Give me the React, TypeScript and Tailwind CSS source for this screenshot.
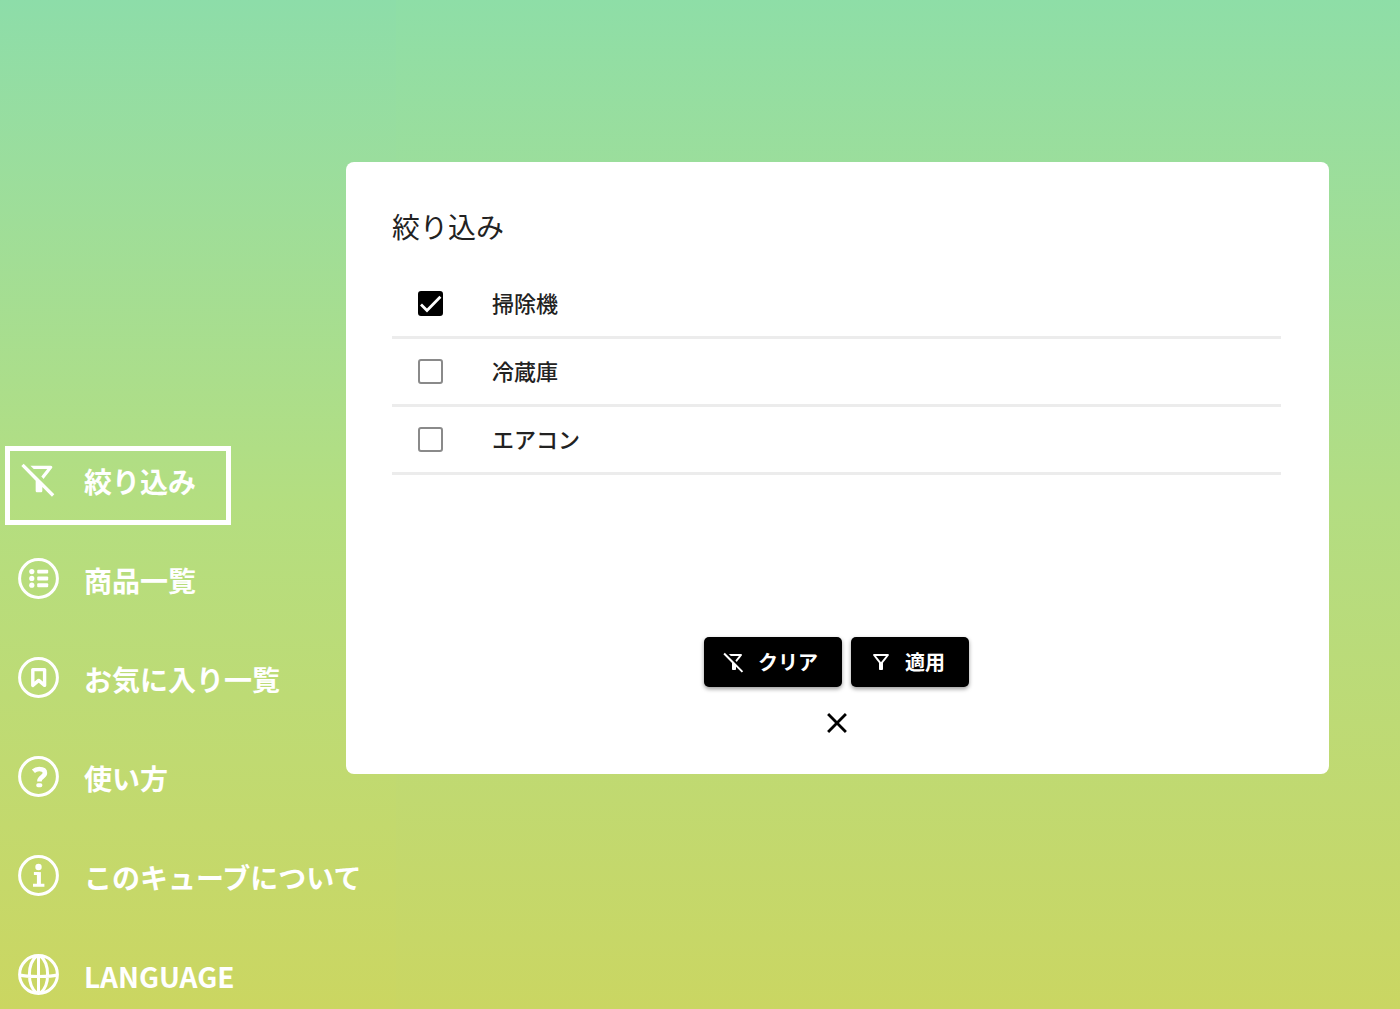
import { useState, type ReactNode } from 'react';

const FILTER_OFF =
  'M16.95 6l-3.57 4.55 1.43 1.43c1.03-1.31 4.98-6.37 4.98-6.37A.998.998 0 0 0 19 4H6.83l2 2h8.12zM2.81 2.81 1.39 4.22 10 13v6c0 .55.45 1 1 1h2c.55 0 1-.45 1-1v-2.17l5.78 5.78 1.41-1.41L2.81 2.81z';
const FILTER =
  'M7 6h10l-5.01 6.3L7 6zM4.25 5.61C6.27 8.2 10 13 10 13v6c0 .55.45 1 1 1h2c.55 0 1-.45 1-1v-6s3.72-4.8 5.74-7.39C20.25 4.95 19.78 4 18.95 4H5.04C4.21 4 3.74 4.95 4.25 5.61z';
const CLOSE =
  'M19 6.41 17.59 5 12 10.59 6.41 5 5 6.41 10.59 12 5 17.59 6.41 19 12 13.41 17.59 19 19 17.59 13.41 12z';

function Solid({ d, className }: { d: string; className: string }) {
  return (
    <svg viewBox="0 0 24 24" fill="currentColor" className={className} aria-hidden="true">
      <path d={d} />
    </svg>
  );
}

function Ring({ children }: { children: ReactNode }) {
  return (
    <svg viewBox="0 0 42 42" fill="none" stroke="currentColor" strokeWidth="3" className="size-[42px]" aria-hidden="true">
      <circle cx="20.5" cy="21.5" r="18.9" />
      {children}
    </svg>
  );
}

const NAV: { label: string; icon: ReactNode }[] = [
  { label: '絞り込み', icon: <Solid d={FILTER_OFF} className="size-10" /> },
  {
    label: '商品一覧',
    icon: (
      <Ring>
        <g fill="currentColor" stroke="none">
          <circle cx="13.8" cy="14.6" r="2.6" />
          <circle cx="13.8" cy="21.4" r="2.6" />
          <circle cx="13.8" cy="28.2" r="2.6" />
          <rect x="19.2" y="12.7" width="11" height="3.9" rx="1" />
          <rect x="19.2" y="19.5" width="11" height="3.9" rx="1" />
          <rect x="19.2" y="26.3" width="11" height="3.9" rx="1" />
        </g>
      </Ring>
    ),
  },
  {
    label: 'お気に入り一覧',
    icon: (
      <Ring>
        <path d="M14.8 13.6h11.8v15.8l-5.9-5-5.9 5z" strokeWidth="3.4" strokeLinejoin="round" />
      </Ring>
    ),
  },
  {
    label: '使い方',
    icon: (
      <Ring>
        <path d="M15.4 16.2c1.700-1.500 3.600-2.200 5.800-2.200 3.500 0 5.700 1.500 5.700 4.100 0 4-5.500 3.700-5.500 8.300" strokeWidth="4.6" />
        <rect x="18.3" y="28.2" width="6" height="4" rx="1.6" fill="currentColor" stroke="none" />
      </Ring>
    ),
  },
  {
    label: 'このキューブについて',
    icon: (
      <Ring>
        <circle cx="20.5" cy="13" r="3.2" fill="currentColor" stroke="none" />
        <path d="M15.9 19.6h5M15 31.3h11.4" strokeWidth="3" />
        <path d="M20.9 18.1v13.2" strokeWidth="4" />
      </Ring>
    ),
  },
  {
    label: 'LANGUAGE',
    icon: (
      <Ring>
        <path d="M20.5 2.6v38M2 22c6 2 31 2 37 0M18.5 3C9 11 9 32 18.5 40M22.5 3c9.5 8 9.5 29 0 37" strokeWidth="3" />
      </Ring>
    ),
  },
];

const OPTIONS = ['掃除機', '冷蔵庫', 'エアコン'];

export default function App() {
  const [checked, setChecked] = useState<string[]>(['掃除機']);
  const toggle = (name: string) =>
    setChecked((list) => (list.includes(name) ? list.filter((n) => n !== name) : [...list, name]));

  return (
    <div className="flex min-h-screen bg-linear-to-b from-[#8edea7] via-[#b3dd82] to-[#cad662] font-['Noto_Sans_CJK_JP',sans-serif]">
      <nav className="w-[396px] shrink-0 bg-linear-to-b from-[#8ddda9] via-[#b4de80] to-[#cbd661] pt-[446px] text-white">
        <ul className="flex flex-col gap-5">
          {NAV.map((item, i) => (
            <li key={item.label} className="ml-[5px] h-[79px] last:h-[68px]">
              <button
                type="button"
                aria-current={i === 0 ? 'page' : undefined}
                className="flex h-full min-w-[226px] items-start border-[5px] border-transparent pt-[7px] pr-4 pl-2 aria-[current]:border-white"
              >
                <span className="flex size-[42px] items-center justify-center">{item.icon}</span>
                <span className="ml-6 text-[28px] leading-[46px] font-bold whitespace-nowrap">{item.label}</span>
              </button>
            </li>
          ))}
        </ul>
      </nav>

      <main className="min-w-0 flex-1">
        <section
          role="dialog"
          aria-labelledby="filter-title"
          className="relative mt-[162px] mr-[71px] -ml-[50px] rounded-lg bg-white pt-11 pr-12 pb-[34px] pl-[46px] text-[#222]"
        >
          <h1 id="filter-title" className="mb-[25px] text-[28px] leading-10 font-normal">
            絞り込み
          </h1>
          <ul>
            {OPTIONS.map((name) => (
              <li key={name} className="h-[68px] border-b-[3px] border-[#ececec]">
                <label className="flex h-full items-center pl-[26px]">
                  <span className="relative grid size-[25px]">
                    <input
                      type="checkbox"
                      checked={checked.includes(name)}
                      onChange={() => toggle(name)}
                      className="peer size-[25px] appearance-none rounded-[3px] border-2 border-[#8a8a8a] checked:border-black checked:bg-black"
                    />
                    <svg
                      viewBox="0 0 25 25"
                      fill="none"
                      stroke="white"
                      strokeWidth="2.8"
                      className="pointer-events-none absolute inset-0 hidden peer-checked:block"
                      aria-hidden="true"
                    >
                      <path d="M3 13.4l6 6L22.4 5.8" />
                    </svg>
                  </span>
                  <span className="ml-[49px] pb-1 text-[22px] leading-8 font-medium">{name}</span>
                </label>
              </li>
            ))}
          </ul>
          <div className="mt-[162px] flex justify-center gap-[9px] text-xl font-bold text-white">
            <button
              type="button"
              onClick={() => setChecked([])}
              className="flex h-[50px] items-center gap-3 rounded-[5px] bg-black pr-6 pl-[18px] shadow-[0_2px_4px_rgba(0,0,0,0.4)]"
            >
              <Solid d={FILTER_OFF} className="size-6" />
              クリア
            </button>
            <button
              type="button"
              className="flex h-[50px] items-center gap-3 rounded-[5px] bg-black pr-6 pl-[18px] shadow-[0_2px_4px_rgba(0,0,0,0.4)]"
            >
              <Solid d={FILTER} className="size-6" />
              適用
            </button>
          </div>
          <div className="mt-[19px] flex justify-center">
            <button type="button" aria-label="閉じる" className="text-black">
              <Solid d={CLOSE} className="size-[34px]" />
            </button>
          </div>
        </section>
      </main>
    </div>
  );
}
